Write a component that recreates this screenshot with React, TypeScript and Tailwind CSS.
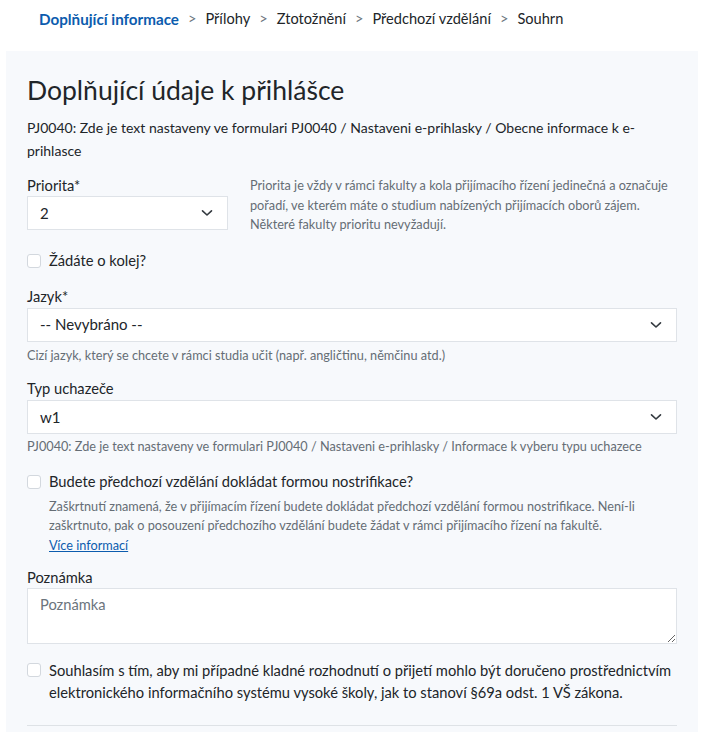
import React from "react";

const Chevron = () => (
  <svg width="12" height="8" viewBox="0 0 12 8" fill="none" className="shrink-0">
    <path d="M1.5 1.8 L6 6 L10.5 1.8" stroke="#343a40" strokeWidth="1.6" strokeLinecap="round" strokeLinejoin="round" />
  </svg>
);

const Select = ({ value, className = "" }: { value: string; className?: string }) => (
  <div className={`flex h-[34px] items-center justify-between border border-[#dfe3e8] bg-white pl-[12px] pr-[14px] text-[15px] text-[#212529] ${className}`}>
    <span>{value}</span>
    <Chevron />
  </div>
);

const Box = () => (
  <span className="mt-[4px] inline-block h-[14px] w-[14px] shrink-0 rounded-[3px] border border-[#d3d8de] bg-white" />
);

export default function App() {
  return (
    <div className="min-h-[732px] bg-white pl-[6px] pr-[12px] text-[#212529]" style={{ fontFamily: 'Lato, sans-serif' }}>
      <nav className="flex items-center pl-[33px] pt-[9px] text-[14.6px] leading-[20px]">
        <span className="text-[15.2px] font-bold text-[#0c5cae]">Doplňující informace</span>
        <span className="mx-[9px] text-[#6c757d]">&gt;</span>
        <span>Přílohy</span>
        <span className="mx-[9px] text-[#6c757d]">&gt;</span>
        <span>Ztotožnění</span>
        <span className="mx-[9px] text-[#6c757d]">&gt;</span>
        <span>Předchozí vzdělání</span>
        <span className="mx-[9px] text-[#6c757d]">&gt;</span>
        <span>Souhrn</span>
      </nav>

      <div className="mt-[22px] bg-[#f7f9fc] px-[21px] pb-[8px] pt-[23px]">
        <h1 className="text-[26.5px] font-normal leading-[32px] text-[#212529]">Doplňující údaje k přihlášce</h1>
        <p className="mt-[10px] text-[14px] leading-[23px]">
          PJ0040: Zde je text nastaveny ve formulari PJ0040 / Nastaveni e-prihlasky / Obecne informace k e-prihlasce
        </p>

        <div className="mt-[13px] flex gap-[22px]">
          <div className="w-[201px] shrink-0">
            <div className="text-[14.7px] leading-[21px]">Priorita*</div>
            <Select value="2" />
          </div>
          <p className="mt-[1px] text-[12.7px] leading-[19.5px] text-[#656d75]">
            Priorita je vždy v rámci fakulty a kola přijímacího řízení jedinečná a označuje pořadí, ve kterém máte o studium nabízených přijímacích oborů zájem. Některé fakulty prioritu nevyžadují.
          </p>
        </div>

        <label className="mt-[15px] flex gap-[8px] text-[14.7px] leading-[21px]">
          <Box />
          <span>Žádáte o kolej?</span>
        </label>

        <div className="mt-[15px]">
          <div className="text-[14.7px] leading-[21px]">Jazyk*</div>
          <Select value="-- Nevybráno --" className="mt-[1px]" />
          <p className="mt-[4px] text-[12.7px] leading-[19.5px] text-[#656d75]">
            Cizí jazyk, který se chcete v rámci studia učit (např. angličtinu, němčinu atd.)
          </p>
        </div>

        <div className="mt-[13px]">
          <div className="text-[14.7px] leading-[21px]">Typ uchazeče</div>
          <Select value="w1" className="mt-[1px]" />
          <p className="mt-[3px] text-[12.7px] leading-[19.5px] text-[#656d75]">
            PJ0040: Zde je text nastaveny ve formulari PJ0040 / Nastaveni e-prihlasky / Informace k vyberu typu uchazece
          </p>
        </div>

        <div className="mt-[14px] flex gap-[8px]">
          <Box />
          <div>
            <div className="text-[14.7px] leading-[21px]">Budete předchozí vzdělání dokládat formou nostrifikace?</div>
            <p className="mt-[5px] text-[12.7px] leading-[19.5px] text-[#656d75]">
              Zaškrtnutí znamená, že v přijímacím řízení budete dokládat předchozí vzdělání formou nostrifikace. Není-li zaškrtnuto, pak o posouzení předchozího vzdělání budete žádat v rámci přijímacího řízení na fakultě.
            </p>
            <div className="text-[12.7px] leading-[19.5px]">
              <a className="text-[#0c5cae] underline" href="#">Více informací</a>
            </div>
          </div>
        </div>

        <div className="mt-[12px]">
          <div className="text-[14.7px] leading-[21px]">Poznámka</div>
          <textarea
            className="block h-[56px] w-full border border-[#dfe3e8] bg-white px-[12px] py-[5px] text-[14.7px] leading-[21px] text-[#212529] placeholder:text-[#6c757d] outline-none"
            placeholder="Poznámka"
          />
        </div>

        <label className="mt-[15px] flex gap-[8px] text-[14.7px] leading-[22px]">
          <Box />
          <span>
            Souhlasím s tím, aby mi případné kladné rozhodnutí o přijetí mohlo být doručeno prostřednictvím elektronického informačního systému vysoké školy, jak to stanoví §69a odst. 1 VŠ zákona.
          </span>
        </label>

        <div className="mt-[22px] h-px bg-[#dee2e6]" />
        <div className="h-[20px]" />
      </div>
    </div>
  );
}
